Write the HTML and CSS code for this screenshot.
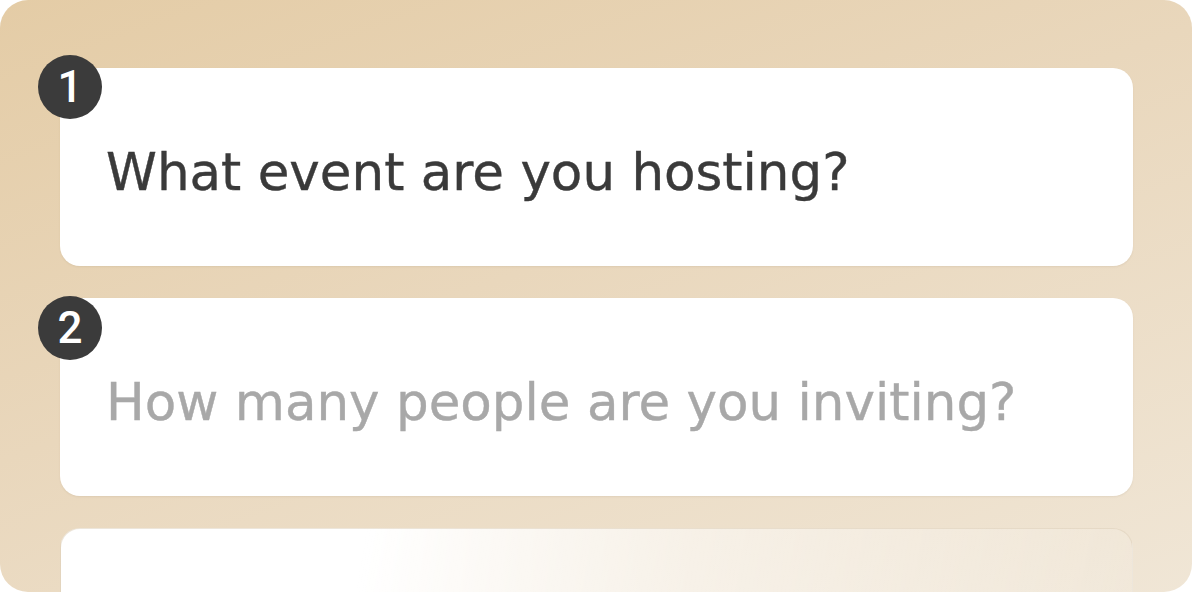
FILE: index.html
```html
<!DOCTYPE html>
<html lang="en">
<head>
<meta charset="utf-8">
<title>Event questions</title>
<link rel="stylesheet" href="styles.css">
</head>
<body>
<main class="panel">
  <section class="card">
    <span class="badge badge-first">1</span>
    <p class="question">What event are you hosting?</p>
  </section>
  <section class="card">
    <span class="badge badge-second">2</span>
    <p class="question question-muted">How many people are you inviting?</p>
  </section>
  <section class="card card-fade"></section>
</main>
</body>
</html>
```

FILE: styles.css
```css
html, body {
  margin: 0;
  padding: 0;
  background: #ffffff;
}

.panel {
  box-sizing: border-box;
  width: 1192px;
  height: 592px;
  border-radius: 28px;
  overflow: hidden;
  background: linear-gradient(160deg, #e4cca6 0%, #e9d7bc 45%, #f0e6d6 100%);
  padding: 68px 59px 0 60px;
  display: flex;
  flex-direction: column;
  gap: 32px;
}

.card {
  position: relative;
  flex: 0 0 auto;
  box-sizing: border-box;
  height: 198px;
  background: #ffffff;
  border-radius: 20px;
  box-shadow: 0 1px 2px rgba(120, 100, 70, 0.10);
  padding: 79px 46px 0 46px;
}

.card-fade {
  height: 120px;
  background: linear-gradient(100deg, #ffffff 28%, rgba(255, 255, 255, 0.55) 58%, rgba(255, 255, 255, 0.12) 100%);
  box-shadow: none;
  border: 1px solid rgba(215, 200, 175, 0.45);
}

.badge {
  position: absolute;
  left: -22px;
  width: 64px;
  height: 64px;
  border-radius: 50%;
  background: #3b3b3b;
  color: #ffffff;
  font-family: Roboto, "Liberation Sans", sans-serif;
  font-weight: 500;
  font-size: 44px;
  line-height: 1;
  display: flex;
  align-items: center;
  justify-content: center;
}

.badge-first {
  top: -13px;
}

.badge-second {
  top: -2px;
}

.question {
  margin: 0;
  font-family: "DejaVu Sans", sans-serif;
  font-size: 51.5px;
  line-height: 1;
  color: #3a3a3a;
  -webkit-text-stroke: 0.4px currentColor;
  white-space: nowrap;
}

.question-muted {
  color: #a8a8a8;
}
```
